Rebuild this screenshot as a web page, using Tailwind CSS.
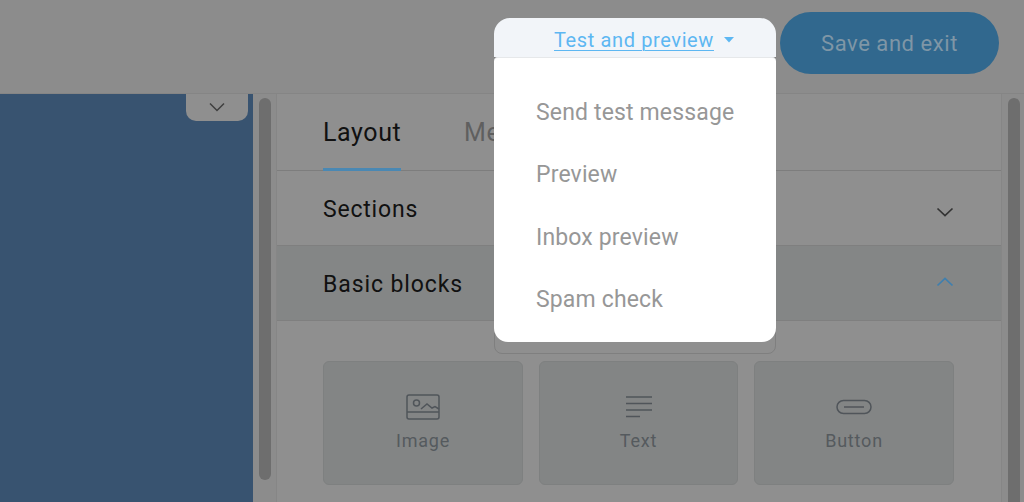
<!doctype html>
<html>
<head>
<meta charset="utf-8">
<script src="https://cdn.jsdelivr.net/npm/@tailwindcss/browser@4"></script>
</head>
<body class="m-0 overflow-hidden">
<div class="relative w-[1024px] h-[502px] overflow-hidden bg-[#8c8c8c] font-['Roboto',sans-serif]">
  <header class="h-[94px] bg-[#8c8c8c] border-b border-[#858585] flex justify-end items-start pt-3 pr-[25px]">
    <div class="w-[219px] h-[62px] rounded-full bg-[#31688e] flex items-center justify-center text-[22px] tracking-[0.55px] text-[#7f96a6]">Save and exit</div>
  </header>
  <div class="flex h-[408px]">
    <div class="relative w-[253px] bg-[#385370] shrink-0">
      <div class="absolute left-[186px] top-0 w-[62px] h-[27px] bg-[#8f8f8f] rounded-b-[10px] flex items-center justify-center pb-[2px]">
        <svg width="18" height="10" viewBox="0 0 18 10" fill="none" stroke="#3f3f3f" stroke-width="1.5"><path d="M2 1.5 9 8.5 16 1.5"/></svg>
      </div>
    </div>
    <div class="w-[23px] shrink-0 pl-[6px] pt-1">
      <div class="w-3 h-[382px] rounded-full bg-[#6e6e6e]"></div>
    </div>
    <main class="w-[726px] shrink-0 bg-[#8f8f8f] border-x border-[#868686]">
      <div class="h-[77px] flex border-b border-[#7d7d7d] pl-[46px] gap-[63px] text-[25px] tracking-[0.6px]">
        <div class="h-[77px] w-[78px] border-b-[3px] border-[#4a88b3] text-[#111] pt-[21px] leading-[36px]">Layout</div>
        <div class="text-[#5f5f5f] pt-[21px] leading-[36px]">Media</div>
      </div>
      <div class="h-[75px] flex items-center justify-between pl-[46px] pr-[47px] border-b border-[#7f7f7f] text-[23px] tracking-[0.8px] text-[#111]">
        <span class="pt-1">Sections</span>
        <svg class="mt-[7px]" width="18" height="10" viewBox="0 0 18 10" fill="none" stroke="#333" stroke-width="1.7"><path d="M1.5 1.5 9 8.5 16.5 1.5"/></svg>
      </div>
      <div class="h-[75px] flex items-center justify-between pl-[46px] pr-[47px] border-b border-[#7f7f7f] bg-[#848686] text-[23px] tracking-[0.9px] text-[#111]">
        <span class="pt-1">Basic blocks</span>
        <svg class="mb-[3px]" width="18" height="10" viewBox="0 0 18 10" fill="none" stroke="#3f7fae" stroke-width="1.7"><path d="M1.5 8.5 9 1.5 16.5 8.5"/></svg>
      </div>
      <div class="grid grid-cols-[200px_199px_200px] gap-x-4 pl-[46px] pt-10">
        <div class="h-[124px] rounded-md bg-[#838585] border border-[#7e8080] flex flex-col items-center pt-[32px] text-[18px] tracking-[0.8px] text-[#555a5e]">
          <svg width="34" height="26" viewBox="0 0 34 26" fill="none" stroke="#50555a" stroke-width="1.5"><rect x="1" y="1" width="32" height="24" rx="2"/><circle cx="10.500" cy="9" r="3"/><path d="M1 18H33M15 15l6-5 5 4 3-1.500 4 2.500"/></svg>
          <span class="mt-[9px] leading-6">Image</span>
        </div>
        <div class="h-[124px] rounded-md bg-[#838585] border border-[#7e8080] flex flex-col items-center pt-[34px] text-[18px] tracking-[0.8px] text-[#555a5e]">
          <svg width="26" height="22" viewBox="0 0 26 22" fill="none" stroke="#50555a" stroke-width="1.500"><path d="M0 1H26M0 7.500H26M0 14H26M0 20.500H14"/></svg>
          <span class="mt-[11px] leading-6">Text</span>
        </div>
        <div class="h-[124px] rounded-md bg-[#838585] border border-[#7e8080] flex flex-col items-center pt-[37px] text-[18px] tracking-[0.8px] text-[#555a5e]">
          <svg width="36" height="16" viewBox="0 0 36 16" fill="none" stroke="#50555a" stroke-width="1.500"><rect x="1" y="1.500" width="34" height="13" rx="6.500"/><path d="M8 8H28"/></svg>
          <span class="mt-[14px] leading-6">Button</span>
        </div>
      </div>
    </main>
    <div class="flex-1 pl-[6px] pt-1">
      <div class="w-3 h-full rounded-t-full bg-[#6e6e6e]"></div>
    </div>
  </div>

  <div class="absolute left-[494px] top-[40px] w-[282px] h-[314px] rounded-b-lg border border-[#7f7f7f]"></div>
  <div class="absolute left-[494px] top-[18px] w-[282px] h-[324px] flex flex-col">
    <div class="h-[39px] rounded-t-[16px] bg-[#f2f5f9] flex items-center justify-center pl-[18px] gap-[10px] text-[20px] tracking-[0.62px] text-[#5db7f2]">
      <span class="underline underline-offset-[3px] decoration-1 leading-[44px] pt-1">Test and preview</span>
      <svg class="mt-[4px]" width="10" height="6" viewBox="0 0 10 6" fill="#5db7f2"><path d="M0 0H10L5 5.500Z"/></svg>
    </div>
    <div class="flex-1 bg-white rounded-t-[4px] rounded-b-[14px] border-t border-[#e6e8ea] pl-[42px] pt-[24px] text-[23px] tracking-[0.15px] text-[#979797]">
      <div class="h-[62px] leading-[62px]">Send test message</div>
      <div class="h-[62px] leading-[62px]">Preview</div>
      <div class="h-[62px] leading-[64px]">Inbox preview</div>
      <div class="h-[62px] leading-[64px]">Spam check</div>
    </div>
  </div>
</div>
</body>
</html>
